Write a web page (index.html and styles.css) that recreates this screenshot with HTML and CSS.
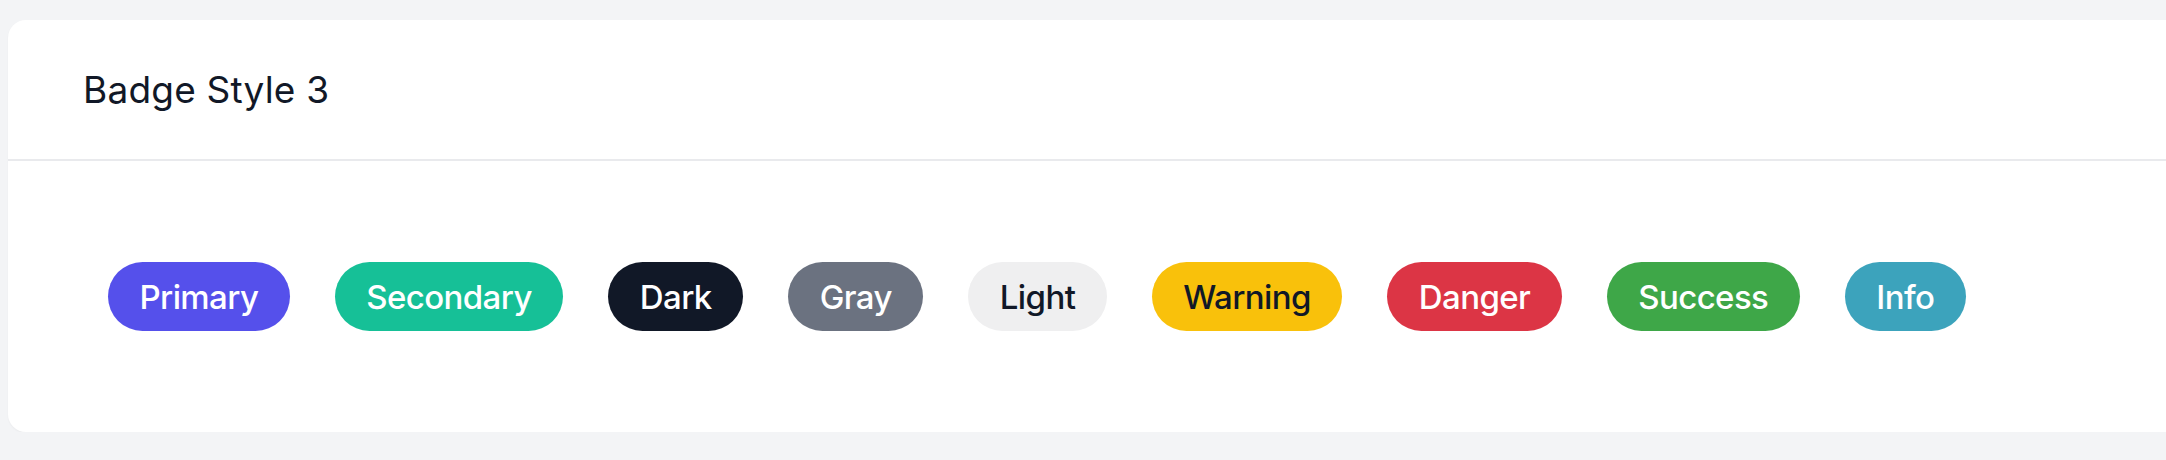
FILE: index.html
```html
<!DOCTYPE html>
<html lang="en">
<head>
<meta charset="utf-8">
<title>Badge Style 3</title>
<link rel="stylesheet" href="styles.css">
</head>
<body>
<div class="card">
  <div class="card-header">
    <h4 class="card-title">Badge Style 3</h4>
  </div>
  <div class="card-body">
    <span class="badge badge-primary">Primary</span>
    <span class="badge badge-secondary">Secondary</span>
    <span class="badge badge-dark">Dark</span>
    <span class="badge badge-gray">Gray</span>
    <span class="badge badge-light">Light</span>
    <span class="badge badge-warning">Warning</span>
    <span class="badge badge-danger">Danger</span>
    <span class="badge badge-success">Success</span>
    <span class="badge badge-info">Info</span>
  </div>
</div>
</body>
</html>
```
FILE: styles.css
```css
html, body {
  margin: 0;
  padding: 0;
}
body {
  background: #f3f4f6;
  font-family: Inter, "Liberation Sans", sans-serif;
  padding-top: 20px;
  padding-left: 8px;
  overflow: hidden;
}
.card {
  background: #ffffff;
  border-radius: 18px 0 0 18px;
  width: calc(100% + 20px);
  height: 412px;
  display: flex;
  flex-direction: column;
  box-shadow: 0 1px 2px rgba(0,0,0,0.04);
}
.card-header {
  height: 139px;
  border-bottom: 2px solid #e9eaed;
  display: flex;
  align-items: center;
  padding-left: 75px;
}
.card-title {
  margin: 0;
  font-size: 37px;
  font-weight: 400;
  color: #111827;
  letter-spacing: 0.2px;
}
.card-body {
  flex: 1;
  display: flex;
  align-items: center;
  gap: 45px;
  padding-left: 100px;
}
.badge {
  display: inline-flex;
  align-items: center;
  justify-content: center;
  height: 69px;
  padding: 0 31.5px;
  border-radius: 35px;
  font-size: 33px;
  font-weight: 500;
  color: #ffffff;
  letter-spacing: -0.6px;
  box-sizing: border-box;
}
.badge-primary { background: #5550eb; }
.badge-secondary { background: #16c097; }
.badge-dark { background: #111827; }
.badge-gray { background: #6b7280; }
.badge-light { background: #efeff0; color: #111827; }
.badge-warning { background: #f9c10b; color: #111827; }
.badge-danger { background: #dc3545; }
.badge-success { background: #3ea748; }
.badge-info { background: #3ca3bc; }
```
